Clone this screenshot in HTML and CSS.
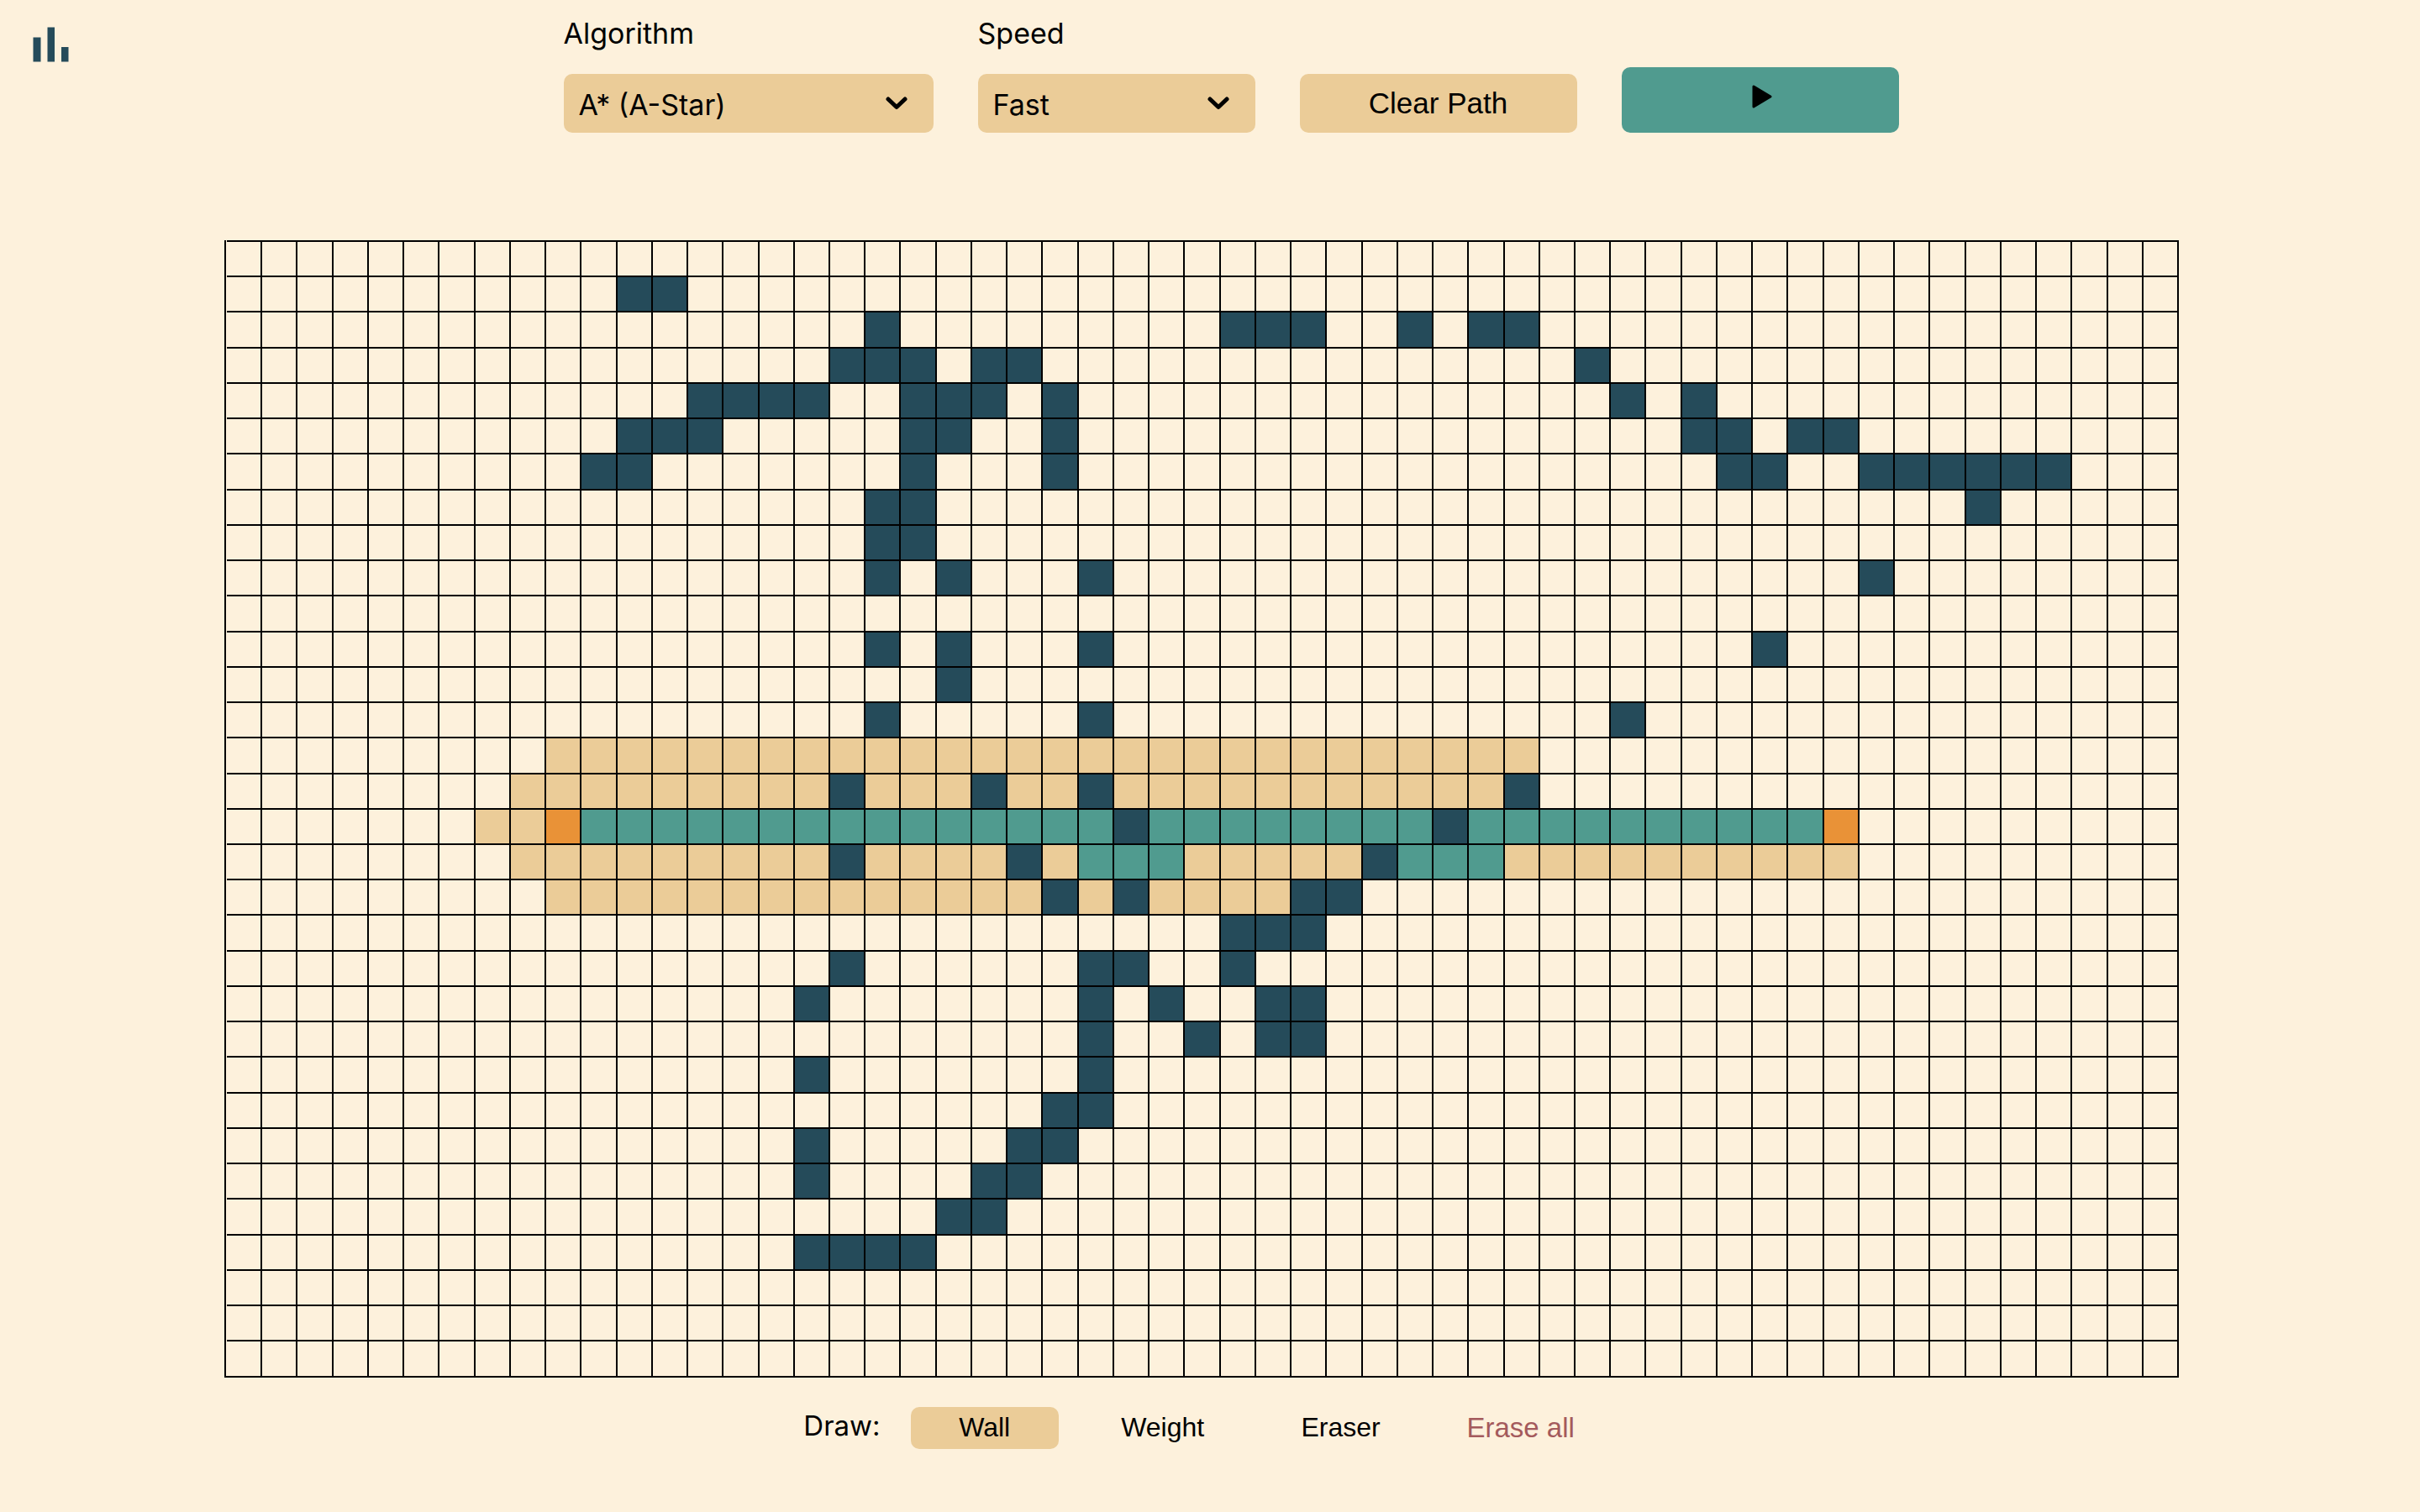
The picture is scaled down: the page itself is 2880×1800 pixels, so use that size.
FILE: index.html
```
<!DOCTYPE html>
<html lang="en">
<head>
<meta charset="utf-8">
<title>Pathfinding Visualizer</title>
<link rel="stylesheet" href="styles.css">
</head>
<body>
<header class="toolbar">
  <a class="home" href="#" aria-label="Sorting visualizer">
    <svg width="46" height="44" viewBox="0 0 46 44" aria-hidden="true">
      <path d="M3.5 12.5h9v29h-9zM20.5 .5h8.500v41h-8.500zM37 24h8.500v17.500h-8.500z"/>
    </svg>
  </a>
  <div class="controls">
    <div class="field field-wide">
      <label for="algorithm">Algorithm</label>
      <div class="picker">
        <select id="algorithm">
          <option>A* (A-Star)</option>
          <option>Dijkstra</option>
        </select>
        <svg class="chevron" width="26" height="16" viewBox="0 0 26 16" aria-hidden="true"><path d="M3 3l10 9.500L23 3"/></svg>
      </div>
    </div>
    <div class="field">
      <label for="speed">Speed</label>
      <div class="picker">
        <select id="speed">
          <option>Fast</option>
          <option>Slow</option>
        </select>
        <svg class="chevron" width="26" height="16" viewBox="0 0 26 16" aria-hidden="true"><path d="M3 3l10 9.500L23 3"/></svg>
      </div>
    </div>
    <button class="clear" type="button">Clear Path</button>
    <button class="play" type="button" aria-label="Play">
      <svg width="24" height="28" viewBox="0 0 24 28" aria-hidden="true"><path d="M2 2v24L22 14z"/></svg>
    </button>
  </div>
</header>
<main>
  <div class="board" id="board"></div>
  <div class="tools">
    <span class="tools-label">Draw:</span>
    <button class="tool tool-active" type="button">Wall</button>
    <button class="tool" type="button">Weight</button>
    <button class="tool" type="button">Eraser</button>
    <button class="tool tool-danger" type="button">Erase all</button>
  </div>
</main>
<script src="board.js"></script>
</body>
</html>
```
FILE: board.js
```
const COLS = 55;
const ROWS = 32;

// Each entry is row: column ranges, later kinds are painted over earlier ones.
const layers = {
  visited: {
    14: '9-36', 15: '8-35', 16: '7-8', 17: '8-45', 18: '9-29'
  },
  path: {
    16: '10-44', 17: '24-26 33-35'
  },
  endpoint: {
    16: '9 45'
  },
  wall: {
    1: '11-12',
    2: '18 28-30 33 35-36',
    3: '17-19 21-22 38',
    4: '13-16 19-21 23 39 41',
    5: '11-13 19-20 23 41-42 44-45',
    6: '10-11 19 23 42-43 46-51',
    7: '18-19 49',
    8: '18-19',
    9: '18 20 24 46',
    11: '18 20 24 43',
    12: '20',
    13: '18 24 39',
    15: '17 21 24 36',
    16: '25 34',
    17: '17 22 32',
    18: '23 25 30-31',
    19: '28-30',
    20: '17 24-25 28',
    21: '16 24 26 29-30',
    22: '24 27 29-30',
    23: '16 24',
    24: '23-24',
    25: '16 22-23',
    26: '16 21-22',
    27: '20-21',
    28: '16-19'
  }
};

const kinds = new Array(COLS * ROWS).fill('');
for (const [kind, rows] of Object.entries(layers)) {
  for (const [row, ranges] of Object.entries(rows)) {
    for (const range of ranges.split(' ')) {
      const [from, to = from] = range.split('-').map(Number);
      for (let col = from; col <= to; col++) kinds[row * COLS + col] = kind;
    }
  }
}

const board = document.getElementById('board');
for (const kind of kinds) {
  const cell = document.createElement('div');
  cell.className = kind ? 'cell ' + kind : 'cell';
  board.append(cell);
}
```
FILE: styles.css
```
* { box-sizing: border-box; }

body {
  margin: 0;
  background: #fdf1dc;
  color: #000;
  font-family: Inter, "Liberation Sans", sans-serif;
  font-size: 34px;
}

button, select {
  margin: 0;
  border: 0;
  border-radius: 10px;
  color: inherit;
}

button { font-family: "Liberation Sans", Arial, sans-serif; }

.toolbar {
  display: flex;
  align-items: flex-start;
  padding-top: 20px;
}

.home {
  width: 100px;
  padding: 12px 0 0 36px;
}

.home svg { display: block; fill: #254b5a; }

.controls {
  flex: 1;
  display: flex;
  justify-content: center;
  align-items: flex-end;
  gap: 53px;
  padding-right: 50px;
}

.field {
  display: flex;
  flex-direction: column;
  gap: 28px;
  width: 330px;
}

.field-wide { width: 440px; }

.field label { line-height: 40px; }

.picker { display: grid; align-items: center; }

.picker select, .chevron { grid-area: 1 / 1; }

.picker select {
  appearance: none;
  width: 100%;
  height: 70px;
  padding: 2px 18px 0;
  background: #ebcc98;
  font: inherit;
}

.chevron {
  justify-self: end;
  margin-right: 31px;
  fill: none;
  stroke: #000;
  stroke-width: 5;
  stroke-linecap: round;
  stroke-linejoin: round;
  pointer-events: none;
}

.clear {
  width: 330px;
  height: 70px;
  background: #ebcc98;
  font-size: 35px;
}

.play {
  width: 330px;
  height: 78px;
  padding: 0 0 6px 4px;
  background: #509b8f;
}

.play path {
  stroke: #000;
  stroke-width: 3;
  stroke-linejoin: round;
}

main { padding: 128px 287px 40px 267px; }

/* The grid lines are the board's own background, seen between the cells. */
.board {
  display: grid;
  box-sizing: content-box;
  aspect-ratio: 55 / 32;
  grid-template-columns: repeat(55, minmax(0, 1fr));
  grid-template-rows: repeat(32, minmax(0, 1fr));
  padding-left: 1px;
  border-left: 2px solid #000;
  border-bottom: 2px solid #000;
  background: #000 content-box;
}

.cell {
  margin: 2px 2px 0 0;
  background: #fdf1dc;
}

.cell.visited { background: #ebcc98; }
.cell.path { background: #509b8f; }
.cell.endpoint { background: #e99237; }
.cell.wall { background: #254b5a; }

.tools {
  display: flex;
  justify-content: center;
  align-items: flex-start;
  gap: 36px;
  padding: 35px 4px 0 0;
}

.tools-label {
  font-size: 33px;
  line-height: 44px;
}

.tool {
  width: 176px;
  height: 50px;
  padding: 0;
  background: none;
  font-size: 32px;
}

.tool-active { background: #ebcc98; }

.tool-danger {
  width: 180px;
  color: #a45a5c;
  font-size: 33px;
}
```
